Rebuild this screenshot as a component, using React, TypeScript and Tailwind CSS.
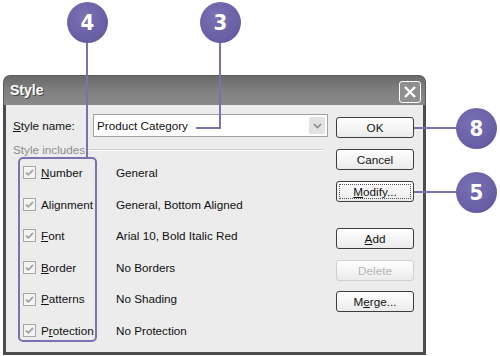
import React from "react";

const rows = [
  { pre: "", key: "N", post: "umber", value: "General" },
  { pre: "Ali", key: "g", post: "nment", value: "General, Bottom Aligned" },
  { pre: "", key: "F", post: "ont", value: "Arial 10, Bold Italic Red" },
  { pre: "", key: "B", post: "order", value: "No Borders" },
  { pre: "", key: "P", post: "atterns", value: "No Shading" },
  { pre: "P", key: "r", post: "otection", value: "No Protection" },
];

function Check() {
  return (
    <svg width="13" height="13" viewBox="0 0 13 13" className="shrink-0">
      <rect x="0.5" y="0.5" width="12" height="12" fill="#f4f4f4" stroke="#a6a6a6" />
      <path d="M3 6.5 L5.3 8.8 L10 4" fill="none" stroke="#a3a3a3" strokeWidth="1.8" />
    </svg>
  );
}

function Btn({
  children,
  disabled,
  focus,
  mt,
}: {
  children: React.ReactNode;
  disabled?: boolean;
  focus?: boolean;
  mt: string;
}) {
  return (
    <div
      className={`${mt} relative flex h-[21px] w-[78px] items-center justify-center rounded-[3px] border bg-gradient-to-b from-white to-[#ebebeb] ${
        disabled ? "border-[#cfcfcf] text-[#b5b5b5]" : "border-[#3d3d3d] text-[#111]"
      }`}
    >
      {focus && (
        <div className="absolute inset-[2px] border border-dotted border-[#555]" />
      )}
      {children}
    </div>
  );
}

function Callout({ n, className }: { n: string; className: string }) {
  return (
    <div
      className={`absolute flex h-[41px] w-[41px] items-center justify-center rounded-full bg-[radial-gradient(circle_at_40%_35%,#7a70b4,#5f559b)] font-['DejaVu_Sans_Condensed','Liberation_Sans_Narrow',sans-serif] text-[22px] font-bold text-white ${className}`}
    >
      {n}
    </div>
  );
}

export default function App() {
  return (
    <div className="relative h-[356px] w-[500px] overflow-hidden bg-white font-['Liberation_Sans',Arial,sans-serif] text-[11.7px] text-[#111]">
      <div className="ml-[3px] pt-[75px]">
        <div className="flex h-[280px] w-[423px] flex-col">
          {/* title bar */}
          <div className="flex h-[30px] items-center justify-between rounded-t-[7px] border border-b-0 border-[#5a5a5a] bg-gradient-to-b from-[#6a6a6a] via-[#808080] to-[#8a8a8a] pl-[6px] pr-[4px]">
            <span className="text-[14px] font-bold text-white [text-shadow:1px_1px_0_#444]">
              Style
            </span>
            <div className="mt-[2px] flex h-[22px] w-[22px] items-center justify-center rounded-[3px] border border-white bg-[#8f8f8f]">
              <svg width="14" height="14" viewBox="0 0 14 14">
                <path d="M2 2 L12 12 M12 2 L2 12" stroke="white" strokeWidth="2.4" />
              </svg>
            </div>
          </div>

          {/* body */}
          <div className="flex flex-1 border-x-[3px] border-b-[3px] border-[#4c4c4c] bg-[#ececec]">
            <div className="w-[324px] pl-[7px] pt-[9px]">
              <div className="flex h-[23px] items-center">
                <span className="w-[80px]">
                  <u>S</u>tyle name:
                </span>
                <div className="flex h-[23px] w-[235px] items-center justify-between border border-[#a0a0a0] bg-white pl-[3px] pr-[2px]">
                  <span>Product Category</span>
                  <div className="flex h-[17px] w-[16px] items-center justify-center rounded-[2px] bg-[#e2e2e2]">
                    <svg width="9" height="6" viewBox="0 0 9 6">
                      <path d="M1 1 L4.5 4.5 L8 1" fill="none" stroke="#8a8a8a" strokeWidth="1.6" />
                    </svg>
                  </div>
                </div>
              </div>

              <div className="mt-[6px] flex h-[14px] items-center">
                <span className="text-[#8c8c8c]">Style includes</span>
                <div className="ml-[4px] mr-[7px] h-[2px] flex-1 border-t border-b border-t-[#cdcdcd] border-b-white" />
              </div>

              {rows.map((r) => (
                <div key={r.value} className="flex h-[31.6px] items-center pl-[10px]">
                  <Check />
                  <span className="ml-[5px] w-[75px]">
                    {r.pre}
                    <u>{r.key}</u>
                    {r.post}
                  </span>
                  <span>{r.value}</span>
                </div>
              ))}
            </div>

            <div className="ml-[6px] flex flex-col pt-[12px]">
              <Btn mt="mt-0">OK</Btn>
              <Btn mt="mt-[11px]">Cancel</Btn>
              <Btn mt="mt-[11px]" focus>
                <span>
                  <u>M</u>odify...
                </span>
              </Btn>
              <Btn mt="mt-[26px]">
                <span>
                  <u>A</u>dd
                </span>
              </Btn>
              <Btn mt="mt-[11px]" disabled>
                Delete
              </Btn>
              <Btn mt="mt-[10px]">
                <span>
                  M<u>e</u>rge...
                </span>
              </Btn>
            </div>
          </div>
        </div>
      </div>

      {/* callouts */}
      <div className="absolute left-[18px] top-[157px] h-[185px] w-[79px] rounded-[5px] border-2 border-[#7a70b2]" />
      <div className="absolute left-[86px] top-[40px] h-[117px] w-[2px] bg-[#7a70b2]" />
      <div className="absolute left-[219px] top-[40px] h-[89px] w-[2px] bg-[#7a70b2]" />
      <div className="absolute left-[196px] top-[127px] h-[2px] w-[25px] bg-[#7a70b2]" />
      <div className="absolute left-[414px] top-[127px] h-[2px] w-[44px] bg-[#7a70b2]" />
      <div className="absolute left-[414px] top-[191px] h-[2px] w-[44px] bg-[#7a70b2]" />

      <Callout n="4" className="left-[67px] top-[2px]" />
      <Callout n="3" className="left-[200px] top-[2px]" />
      <Callout n="8" className="left-[456px] top-[108px]" />
      <Callout n="5" className="left-[456px] top-[172px]" />
    </div>
  );
}
